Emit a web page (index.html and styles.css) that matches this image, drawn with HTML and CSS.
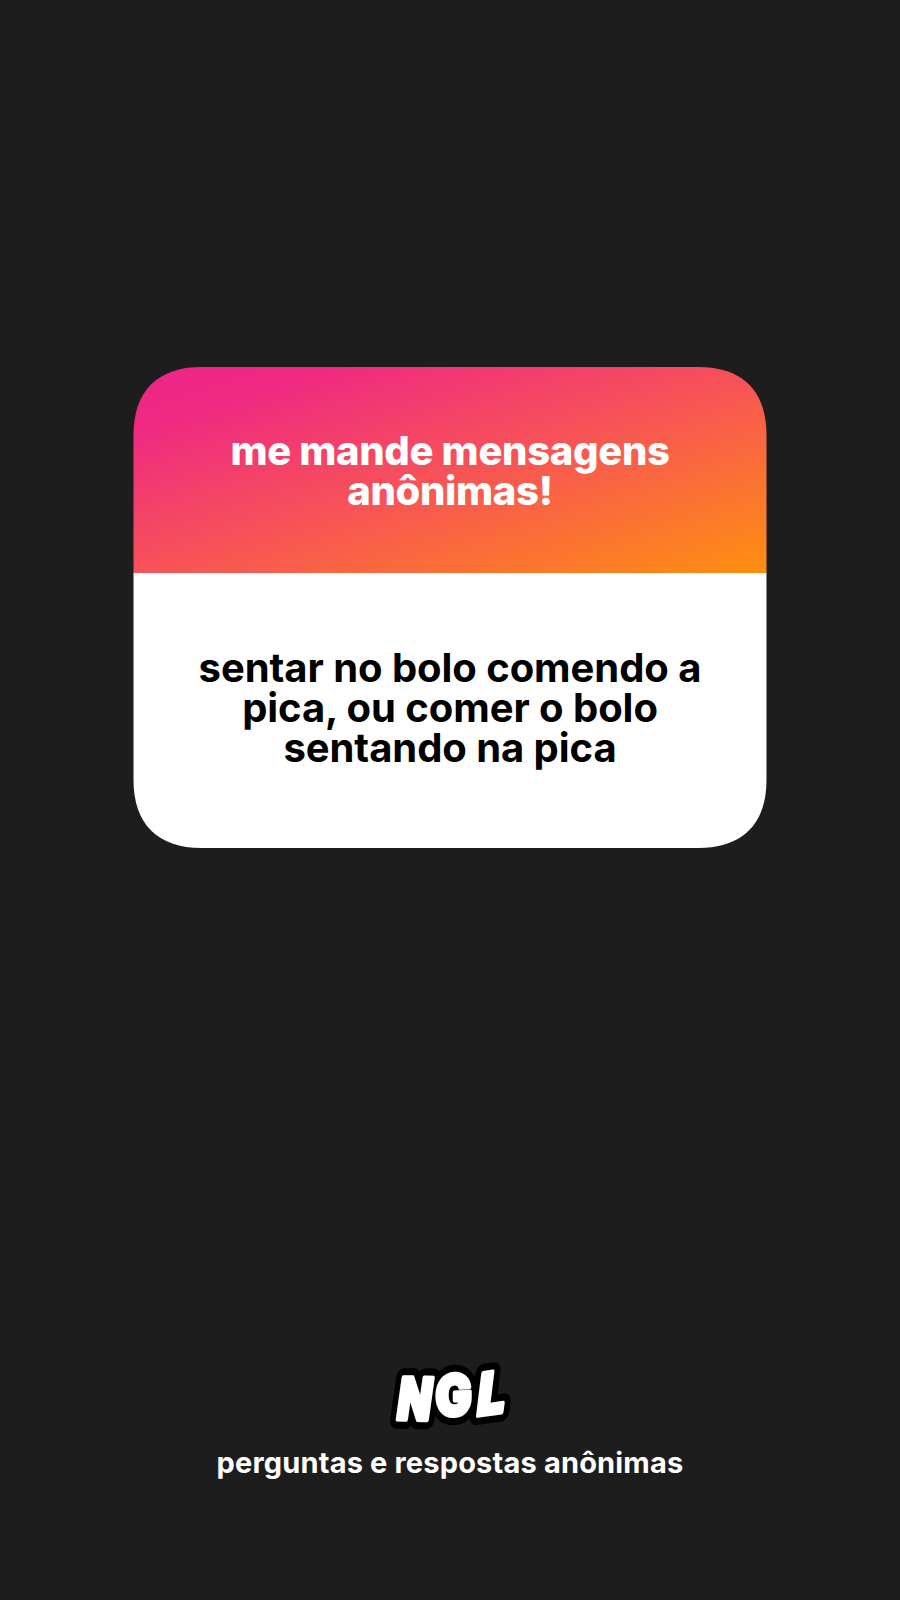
FILE: index.html
```
<!DOCTYPE html>
<html lang="pt-BR">
<head>
<meta charset="utf-8">
<title>NGL</title>
<link rel="stylesheet" href="styles.css">
</head>
<body>
<main class="story">
  <section class="card">
    <header class="card-head"><h1 class="prompt">me mande mensagens<br>anônimas!</h1></header>
    <p class="message">sentar no bolo comendo a<br>pica, ou comer o bolo<br>sentando na pica</p>
  </section>
  <footer class="brand">
    <svg class="logo" viewBox="0 0 140 90" role="img" aria-label="NGL">
      <g class="logo-back">
        <text transform="translate(15.2 69.4) rotate(1) skewX(-7) scale(.79 1.04)">N</text>
        <text transform="translate(55.5 66.5) rotate(-3) skewX(-3) scale(.86 1.01)">G</text>
        <text transform="translate(95.5 66) rotate(-8) skewX(-15) scale(.88 1.02)">L</text>
      </g>
      <g class="logo-front">
        <text transform="translate(15.2 69.4) rotate(1) skewX(-7) scale(.79 1.04)">N</text>
        <text transform="translate(55.5 66.5) rotate(-3) skewX(-3) scale(.86 1.01)">G</text>
        <text transform="translate(95.5 66) rotate(-8) skewX(-15) scale(.88 1.02)">L</text>
      </g>
    </svg>
    <p class="tagline">perguntas e respostas anônimas</p>
  </footer>
</main>
</body>
</html>
```
FILE: styles.css
```
* { box-sizing: border-box; margin: 0; padding: 0; }
body { background: #1d1d1d; font-family: Inter, "Liberation Sans", sans-serif; }
.story { height: 1600px; padding: 367px 133px 0; display: flex; flex-direction: column; align-items: center; overflow: hidden; }
.card {
  width: 634px; height: 481px; flex: none; text-align: center;
  clip-path: path("M.5 68C.5 24 24.5 0 68.5 0H565.5C609.5 0 633.5 24 633.5 68V413C633.5 457 609.5 481 565.5 481H68.5C24.5 481 .5 457 .5 413Z");
}
.card-head { height: 206px; padding-top: 64px; background: linear-gradient(to bottom right, #ee2488 0%, #ef2982 15%, #f75357 51%, #ff8f10 100%); }
.prompt { color: #fff; font-size: 40px; line-height: 40.4px; font-weight: 800; letter-spacing: -.33px; }
.message { height: 275px; padding-top: 74.5px; background: #fff; color: #000; font-size: 40px; line-height: 40.3px; font-weight: 700; letter-spacing: -.06px; }
.brand { margin-top: 502px; display: flex; flex-direction: column; align-items: center; }
.logo { width: 140px; height: 90px; display: block; }
.logo text { font-family: Inter, sans-serif; font-weight: 900; font-size: 56px; stroke-linejoin: round; }
.logo-back { fill: #000; stroke: #000; stroke-width: 18px; }
.logo-front { fill: #fff; stroke: #fff; stroke-width: 4px; }
.tagline { margin-top: 5px; color: #fff; font-size: 29px; line-height: 36px; font-weight: 700; letter-spacing: .17px; white-space: nowrap; }
```
